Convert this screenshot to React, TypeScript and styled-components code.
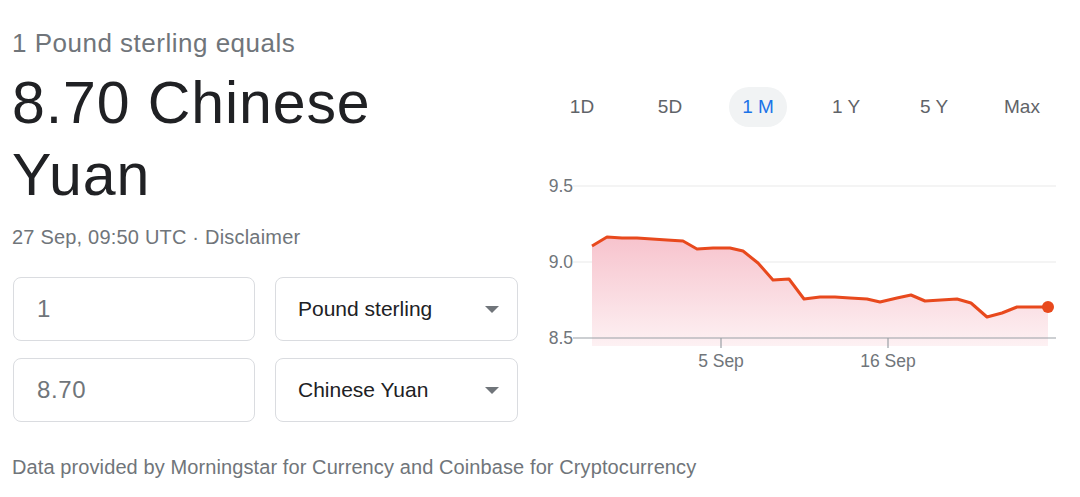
import styled, { createGlobalStyle } from "styled-components";

const GlobalStyle = createGlobalStyle`
  html, body {
    margin: 0;
    padding: 0;
    background: #fff;
    font-family: "Liberation Sans", Arial, sans-serif;
  }
`;

const points: [number, number][] = [
  [62, 81], [77, 72], [92, 73], [107, 73], [137, 75], [153, 76], [167, 84],
  [183, 83], [200, 83], [213, 86], [228, 98], [243, 115], [259, 114],
  [274, 134], [290, 132], [305, 132], [320, 133], [337, 134], [350, 137],
  [367, 133], [381, 130], [395, 136], [427, 134], [441, 138], [457, 152],
  [472, 148], [487, 142], [503, 142], [518, 142],
];

const ranges = ["1D", "5D", "1 M", "1 Y", "5 Y", "Max"];

export default function App() {
  const line = points.map(([x, y], i) => `${i ? "L" : "M"}${x} ${y}`).join(" ");
  const last = points[points.length - 1];
  const area = `${line} L${last[0]} 181 L${points[0][0]} 181 Z`;

  return (
    <>
      <GlobalStyle />
      <Page>
        <Converter>
          <Heading>1 Pound sterling equals</Heading>
          <Result>8.70 Chinese Yuan</Result>
          <Stamp>27 Sep, 09:50 UTC · Disclaimer</Stamp>
          <Fields>
            <Amount>1</Amount>
            <Currency>
              Pound sterling
              <Caret />
            </Currency>
            <Amount>8.70</Amount>
            <Currency>
              Chinese Yuan
              <Caret />
            </Currency>
          </Fields>
          <Source>
            Data provided by Morningstar for Currency and Coinbase for Cryptocurrency
          </Source>
        </Converter>

        <ChartPanel>
          <Tabs>
            {ranges.map((r) => (
              <Tab key={r} $active={r === "1 M"}>
                <span>{r}</span>
              </Tab>
            ))}
          </Tabs>
          <svg width="540" height="210" viewBox="0 0 540 210">
            <defs>
              <linearGradient id="fill" x1="0" y1="0" x2="0" y2="1">
                <stop offset="0" stopColor="#f7c3cd" />
                <stop offset="1" stopColor="#fdf1f3" />
              </linearGradient>
            </defs>
            <line x1="43" y1="21" x2="526" y2="21" stroke="#f1f1f1" strokeWidth="1.5" />
            <line x1="43" y1="97" x2="526" y2="97" stroke="#f1f1f1" strokeWidth="1.5" />
            <path d={area} fill="url(#fill)" />
            <line x1="43" y1="173" x2="526" y2="173" stroke="#9aa0a6" strokeWidth="1.2" />
            <line x1="191" y1="173" x2="191" y2="183" stroke="#9aa0a6" strokeWidth="1.2" />
            <line x1="358" y1="173" x2="358" y2="183" stroke="#9aa0a6" strokeWidth="1.2" />
            <path d={line} fill="none" stroke="#e8491d" strokeWidth="3" strokeLinejoin="round" />
            <circle cx={last[0]} cy={last[1]} r="6" fill="#e8491d" />
            <g fill="#70757a" fontSize="17.5" fontFamily="Liberation Sans, Arial, sans-serif">
              <text x="43" y="21" textAnchor="end" dominantBaseline="central">9.5</text>
              <text x="43" y="97" textAnchor="end" dominantBaseline="central">9.0</text>
              <text x="43" y="173" textAnchor="end" dominantBaseline="central">8.5</text>
              <text x="191" y="196" textAnchor="middle" dominantBaseline="central">5 Sep</text>
              <text x="358" y="196" textAnchor="middle" dominantBaseline="central">16 Sep</text>
            </g>
          </svg>
        </ChartPanel>
      </Page>
    </>
  );
}

const Page = styled.div`
  display: flex;
  width: 1080px;
  height: 497px;
  overflow: hidden;
`;

const Converter = styled.div`
  width: 518px;
  padding: 28px 0 0 12px;
  box-sizing: border-box;
  flex-shrink: 0;
`;

const Heading = styled.div`
  font-size: 26px;
  line-height: 30px;
  color: #70757a;
  letter-spacing: 0.5px;
`;

const Result = styled.div`
  margin-top: 9px;
  font-size: 59px;
  line-height: 72px;
  color: #202124;
  letter-spacing: 0.9px;
  width: 400px;
`;

const Stamp = styled.div`
  margin-top: 14px;
  font-size: 20px;
  line-height: 24px;
  color: #70757a;
  letter-spacing: 0.2px;
`;

const Fields = styled.div`
  margin: 28px 0 0 1px;
  display: grid;
  grid-template-columns: 242px 243px;
  grid-auto-rows: 64px;
  column-gap: 20px;
  row-gap: 17px;
`;

const Box = styled.div`
  box-sizing: border-box;
  border: 1px solid #dadce0;
  border-radius: 8px;
  display: flex;
  align-items: center;
`;

const Amount = styled(Box)`
  padding-left: 23px;
  font-size: 24px;
  letter-spacing: 0.6px;
  color: #70757a;
`;

const Currency = styled(Box)`
  padding: 0 18px 0 22px;
  justify-content: space-between;
  font-size: 21px;
  color: #202124;
`;

const Caret = styled.span`
  width: 0;
  height: 0;
  border-left: 7px solid transparent;
  border-right: 7px solid transparent;
  border-top: 7px solid #70757a;
`;

const Source = styled.div`
  margin-top: 33px;
  font-size: 20px;
  line-height: 24px;
  color: #70757a;
  letter-spacing: 0.1px;
  white-space: nowrap;
`;

const ChartPanel = styled.div`
  width: 540px;
  margin-left: 12px;
  display: flex;
  flex-direction: column;
`;

const Tabs = styled.div`
  margin-top: 87px;
  padding-left: 8px;
  display: grid;
  grid-template-columns: repeat(6, 88px);
  height: 40px;
  margin-bottom: 38px;
`;

const Tab = styled.div<{ $active?: boolean }>`
  display: flex;
  align-items: center;
  justify-content: center;

  span {
    display: flex;
    align-items: center;
    justify-content: center;
    height: 40px;
    min-width: 58px;
    border-radius: 20px;
    font-size: 19px;
    color: ${(p) => (p.$active ? "#1a73e8" : "#5f6368")};
    background: ${(p) => (p.$active ? "#f1f3f4" : "transparent")};
  }
`;
